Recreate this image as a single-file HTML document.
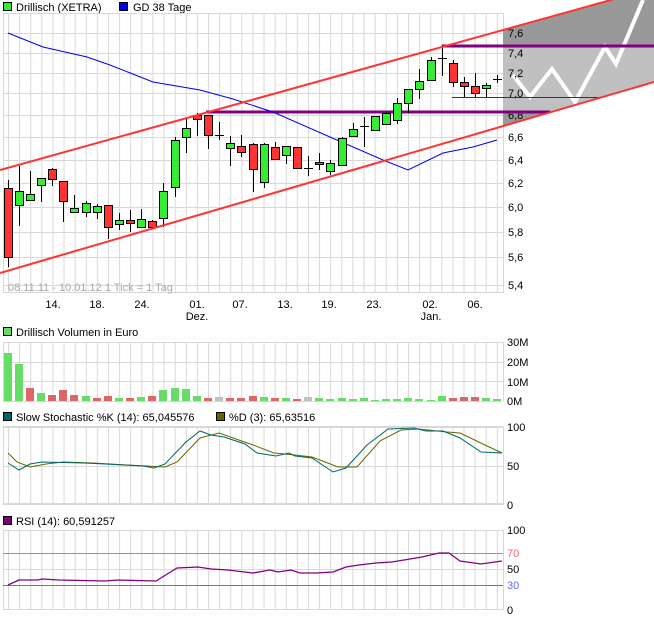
<!DOCTYPE html>
<html><head><meta charset="utf-8"><style>
html,body{margin:0;padding:0;background:#fff;}
svg{display:block;font-family:"Liberation Sans",sans-serif;font-size:11px;}
</style></head><body>
<svg width="654" height="618" viewBox="0 0 654 618" xmlns="http://www.w3.org/2000/svg">
<defs>
<pattern id="vg" x="8" y="0" width="11.11" height="618" patternUnits="userSpaceOnUse">
<rect x="0" y="0" width="1" height="618" fill="#d8d8d8"/>
</pattern>
<clipPath id="chan"><polygon points="503,29 654,-12 654,82 503,127"/></clipPath>
</defs>

<!-- legend -->
<rect x="3.5" y="2.5" width="8" height="8" fill="#33ee33" stroke="#000"/>
<text x="16" y="11" fill="#000">Drillisch (XETRA)</text>
<rect x="119.5" y="2.5" width="8" height="8" fill="#0000ee" stroke="#000"/>
<text x="133" y="11" fill="#000">GD 38 Tage</text>

<!-- main grid -->
<rect x="3" y="13" width="500" height="280" fill="url(#vg)"/>
<g stroke="#d8d8d8" stroke-width="1">
<line x1="3.5" y1="13" x2="3.5" y2="293"/>
<line x1="503.5" y1="13" x2="503.5" y2="293"/>
<line x1="3" y1="13.5" x2="503" y2="13.5"/>
<line x1="3" y1="33.5" x2="503" y2="33.5"/>
<line x1="3" y1="53.5" x2="503" y2="53.5"/>
<line x1="3" y1="73.5" x2="503" y2="73.5"/>
<line x1="3" y1="93.5" x2="503" y2="93.5"/>
<line x1="3" y1="115.5" x2="503" y2="115.5"/>
<line x1="3" y1="137.5" x2="503" y2="137.5"/>
<line x1="3" y1="160.5" x2="503" y2="160.5"/>
<line x1="3" y1="183.5" x2="503" y2="183.5"/>
<line x1="3" y1="207.5" x2="503" y2="207.5"/>
<line x1="3" y1="232.5" x2="503" y2="232.5"/>
<line x1="3" y1="257.5" x2="503" y2="257.5"/>
<line x1="3" y1="285.5" x2="503" y2="285.5"/>
<line x1="3" y1="292.5" x2="503" y2="292.5"/>
</g>

<!-- right projection area -->
<g clip-path="url(#chan)">
<rect x="503" y="-20" width="151" height="160" fill="#999"/>
<rect x="503" y="46" width="151" height="66" fill="#c0c0c0"/>
</g>
<polyline points="513,75 530,97 552,69 575,102 605,47 616,64 643,0" fill="none" stroke="#fff" stroke-width="4"/>

<!-- price labels -->
<g fill="#000">
<text x="508" y="37">7,6</text><text x="508" y="57">7,4</text><text x="508" y="77">7,2</text>
<text x="508" y="97">7,0</text><text x="508" y="119">6,8</text><text x="508" y="141">6,6</text>
<text x="508" y="164">6,4</text><text x="508" y="187">6,2</text><text x="508" y="211">6,0</text>
<text x="508" y="236">5,8</text><text x="508" y="261">5,6</text><text x="508" y="289">5,4</text>
</g>

<!-- horizontal lines -->
<line x1="206" y1="112" x2="550" y2="112" stroke="#800080" stroke-width="3"/>
<line x1="442" y1="46" x2="654" y2="46" stroke="#800080" stroke-width="3"/>
<line x1="452" y1="97.5" x2="603" y2="97.5" stroke="#800080" stroke-width="1"/>

<!-- blue MA -->
<polyline points="8,33 43,47 87,57 110,65 153,82 200,90 233,99 273,112 330,137 383,160 408,170 443,153 473,147 497,140" fill="none" stroke="#0000ee" stroke-width="1"/>

<!-- candles -->
<g stroke="#000" stroke-width="1">
<line x1="8.5" y1="180" x2="8.5" y2="267"/><rect x="4.5" y="188.5" width="8" height="69" fill="#ff3333"/>
<line x1="19.5" y1="166" x2="19.5" y2="226"/><rect x="15.5" y="191.5" width="8" height="14" fill="#33ee33"/>
<line x1="30.5" y1="171" x2="30.5" y2="200"/><rect x="26.5" y="194.5" width="8" height="6" fill="#33ee33"/>
<line x1="41.5" y1="178" x2="41.5" y2="202"/><rect x="37.5" y="178.5" width="8" height="7" fill="#33ee33"/>
<line x1="52.5" y1="168" x2="52.5" y2="186"/><rect x="48.5" y="169.5" width="8" height="10" fill="#ff3333"/>
<line x1="63.5" y1="181" x2="63.5" y2="222"/><rect x="59.5" y="181.5" width="8" height="20" fill="#ff3333"/>
<line x1="74.5" y1="195" x2="74.5" y2="212"/><rect x="70.5" y="208.5" width="8" height="4" fill="#33ee33"/>
<line x1="86.5" y1="201" x2="86.5" y2="217"/><rect x="82.5" y="203.5" width="8" height="9" fill="#33ee33"/>
<line x1="97.5" y1="204" x2="97.5" y2="219"/><rect x="93.5" y="206.5" width="8" height="6" fill="#33ee33"/>
<line x1="108.5" y1="205" x2="108.5" y2="239"/><rect x="104.5" y="205.5" width="8" height="22" fill="#ff3333"/>
<line x1="119.5" y1="213" x2="119.5" y2="230"/><rect x="115.5" y="220.5" width="8" height="4" fill="#33ee33"/>
<line x1="130.5" y1="210" x2="130.5" y2="232"/><rect x="126.5" y="220.5" width="8" height="3" fill="#ff3333"/>
<line x1="141.5" y1="209" x2="141.5" y2="228"/><rect x="137.5" y="219.5" width="8" height="8" fill="#33ee33"/>
<line x1="152.5" y1="220" x2="152.5" y2="228"/><rect x="148.5" y="221.5" width="8" height="6" fill="#ff3333"/>
<line x1="163.5" y1="183" x2="163.5" y2="227"/><rect x="159.5" y="191.5" width="8" height="27" fill="#33ee33"/>
<line x1="175.5" y1="137" x2="175.5" y2="197"/><rect x="171.5" y="140.5" width="8" height="47" fill="#33ee33"/>
<line x1="186.5" y1="119" x2="186.5" y2="153"/><rect x="182.5" y="128.5" width="8" height="9" fill="#33ee33"/>
<line x1="197.5" y1="113" x2="197.5" y2="136"/><rect x="193.5" y="115.5" width="8" height="4" fill="#ff3333"/>
<line x1="208.5" y1="115" x2="208.5" y2="149"/><rect x="204.5" y="115.5" width="8" height="20" fill="#ff3333"/>
<line x1="219.5" y1="122" x2="219.5" y2="140"/><line x1="215" y1="135.5" x2="224" y2="135.5"/>
<line x1="230.5" y1="136" x2="230.5" y2="166"/><rect x="226.5" y="143.5" width="8" height="5" fill="#33ee33"/>
<line x1="241.5" y1="135" x2="241.5" y2="157"/><rect x="237.5" y="146.5" width="8" height="6" fill="#ff3333"/>
<line x1="253.5" y1="143" x2="253.5" y2="192"/><rect x="249.5" y="144.5" width="8" height="25" fill="#ff3333"/>
<line x1="264.5" y1="143" x2="264.5" y2="188"/><rect x="260.5" y="144.5" width="8" height="38" fill="#33ee33"/>
<line x1="275.5" y1="142" x2="275.5" y2="160"/><rect x="271.5" y="147.5" width="8" height="12" fill="#ff3333"/>
<line x1="286.5" y1="146" x2="286.5" y2="164"/><rect x="282.5" y="146.5" width="8" height="9" fill="#33ee33"/>
<line x1="297.5" y1="147" x2="297.5" y2="169"/><rect x="293.5" y="147.5" width="8" height="21" fill="#ff3333"/>
<line x1="308.5" y1="156" x2="308.5" y2="176"/><line x1="304" y1="168.5" x2="313" y2="168.5"/>
<line x1="319.5" y1="153" x2="319.5" y2="170"/><rect x="315.5" y="162.5" width="8" height="2" fill="#ff3333"/>
<line x1="330.5" y1="160" x2="330.5" y2="175"/><rect x="326.5" y="163.5" width="8" height="8" fill="#33ee33"/>
<line x1="342.5" y1="137" x2="342.5" y2="166"/><rect x="338.5" y="138.5" width="8" height="27" fill="#33ee33"/>
<line x1="353.5" y1="123" x2="353.5" y2="137"/><rect x="349.5" y="129.5" width="8" height="7" fill="#33ee33"/>
<line x1="364.5" y1="117" x2="364.5" y2="147"/><line x1="360" y1="126.5" x2="369" y2="126.5"/>
<line x1="375.5" y1="116" x2="375.5" y2="130"/><rect x="371.5" y="116.5" width="8" height="14" fill="#33ee33"/>
<line x1="386.5" y1="112" x2="386.5" y2="124"/><rect x="382.5" y="113.5" width="8" height="11" fill="#33ee33"/>
<line x1="397.5" y1="98" x2="397.5" y2="124"/><rect x="393.5" y="103.5" width="8" height="17" fill="#33ee33"/>
<line x1="408.5" y1="89" x2="408.5" y2="113"/><rect x="404.5" y="89.5" width="8" height="14" fill="#33ee33"/>
<line x1="419.5" y1="69" x2="419.5" y2="99"/><rect x="415.5" y="81.5" width="8" height="8" fill="#33ee33"/>
<line x1="431.5" y1="57" x2="431.5" y2="80"/><rect x="427.5" y="60.5" width="8" height="20" fill="#33ee33"/>
<line x1="442.5" y1="45" x2="442.5" y2="76"/><line x1="438" y1="58.5" x2="447" y2="58.5"/>
<line x1="453.5" y1="60" x2="453.5" y2="87"/><rect x="449.5" y="63.5" width="8" height="19" fill="#ff3333"/>
<line x1="464.5" y1="77" x2="464.5" y2="97"/><rect x="460.5" y="82.5" width="8" height="4" fill="#ff3333"/>
<line x1="475.5" y1="73" x2="475.5" y2="97"/><rect x="471.5" y="86.5" width="8" height="7" fill="#ff3333"/>
<line x1="486.5" y1="83" x2="486.5" y2="97"/><rect x="482.5" y="85.5" width="8" height="3" fill="#33ee33"/>
<line x1="497.5" y1="75" x2="497.5" y2="83"/><line x1="493" y1="79.5" x2="502" y2="79.5"/>
</g>

<!-- red channel -->
<line x1="0" y1="170" x2="654" y2="-12" stroke="#ff3333" stroke-width="2"/>
<line x1="0" y1="273" x2="654" y2="82" stroke="#ff3333" stroke-width="2"/>

<text x="8" y="291" fill="#aaa">08.11.11 - 10.01.12   1 Tick = 1 Tag</text>

<!-- date labels -->
<g fill="#000" text-anchor="middle">
<text x="53" y="308">14.</text><text x="97" y="308">18.</text><text x="142" y="308">24.</text>
<text x="197" y="308">01.</text><text x="240" y="308">07.</text><text x="285" y="308">13.</text>
<text x="329" y="308">19.</text><text x="374" y="308">23.</text><text x="430" y="308">02.</text>
<text x="475" y="308">06.</text>
<text x="197" y="320">Dez.</text><text x="431" y="320">Jan.</text>
</g>

<!-- volume -->
<rect x="3.5" y="327.5" width="8" height="8" fill="#66dd66" stroke="#000"/>
<text x="16" y="336">Drillisch Volumen in Euro</text>
<rect x="3" y="342" width="500" height="59" fill="url(#vg)"/>
<g stroke="#d8d8d8">
<line x1="3.5" y1="342" x2="3.5" y2="401"/><line x1="503.5" y1="342" x2="503.5" y2="401"/>
<line x1="3" y1="342.5" x2="503" y2="342.5"/><line x1="3" y1="362.5" x2="503" y2="362.5"/>
<line x1="3" y1="381.5" x2="503" y2="381.5"/>
</g>
<g>
<rect x="4" y="353" width="8" height="48" fill="#66dd66"/>
<rect x="15" y="364" width="8" height="37" fill="#66dd66"/>
<rect x="26" y="388" width="8" height="13" fill="#dd6666"/>
<rect x="37" y="393" width="8" height="8" fill="#66dd66"/>
<rect x="48" y="395" width="8" height="6" fill="#dd6666"/>
<rect x="59" y="390" width="8" height="11" fill="#dd6666"/>
<rect x="70" y="395" width="8" height="6" fill="#dd6666"/>
<rect x="82" y="396" width="8" height="5" fill="#66dd66"/>
<rect x="93" y="398" width="8" height="3" fill="#dd6666"/>
<rect x="104" y="396" width="8" height="5" fill="#dd6666"/>
<rect x="115" y="398" width="8" height="3" fill="#66dd66"/>
<rect x="126" y="398" width="8" height="3" fill="#dd6666"/>
<rect x="137" y="397" width="8" height="4" fill="#66dd66"/>
<rect x="148" y="396" width="8" height="5" fill="#dd6666"/>
<rect x="159" y="390" width="8" height="11" fill="#66dd66"/>
<rect x="171" y="388" width="8" height="13" fill="#66dd66"/>
<rect x="182" y="389" width="8" height="12" fill="#66dd66"/>
<rect x="193" y="396" width="8" height="5" fill="#66dd66"/>
<rect x="204" y="398" width="8" height="3" fill="#dd6666"/>
<rect x="215" y="397" width="8" height="4" fill="#c0c0c0"/>
<rect x="226" y="398" width="8" height="3" fill="#dd6666"/>
<rect x="237" y="398" width="8" height="3" fill="#dd6666"/>
<rect x="249" y="396" width="8" height="5" fill="#dd6666"/>
<rect x="260" y="397" width="8" height="4" fill="#66dd66"/>
<rect x="271" y="398" width="8" height="3" fill="#dd6666"/>
<rect x="282" y="398" width="8" height="3" fill="#66dd66"/>
<rect x="293" y="399" width="8" height="2" fill="#dd6666"/>
<rect x="304" y="397" width="8" height="4" fill="#c0c0c0"/>
<rect x="315" y="398" width="8" height="3" fill="#66dd66"/>
<rect x="326" y="399" width="8" height="2" fill="#66dd66"/>
<rect x="338" y="398" width="8" height="3" fill="#66dd66"/>
<rect x="349" y="399" width="8" height="2" fill="#66dd66"/>
<rect x="360" y="398" width="8" height="3" fill="#66dd66"/>
<rect x="371" y="400" width="8" height="1" fill="#66dd66"/>
<rect x="382" y="399" width="8" height="2" fill="#66dd66"/>
<rect x="393" y="399" width="8" height="2" fill="#66dd66"/>
<rect x="404" y="398" width="8" height="3" fill="#66dd66"/>
<rect x="415" y="399" width="8" height="2" fill="#66dd66"/>
<rect x="427" y="400" width="8" height="1" fill="#66dd66"/>
<rect x="438" y="396" width="8" height="5" fill="#66dd66"/>
<rect x="449" y="398" width="8" height="3" fill="#dd6666"/>
<rect x="460" y="397" width="8" height="4" fill="#dd6666"/>
<rect x="471" y="397" width="8" height="4" fill="#dd6666"/>
<rect x="482" y="398" width="8" height="3" fill="#66dd66"/>
<rect x="493" y="399" width="8" height="2" fill="#66dd66"/>
</g>
<line x1="3" y1="401.5" x2="503" y2="401.5" stroke="#d8d8d8"/>
<g fill="#000">
<text x="507" y="346">30M</text><text x="507" y="366">20M</text>
<text x="507" y="386">10M</text><text x="507" y="405">0M</text>
</g>

<!-- stochastic -->
<rect x="3.5" y="412.5" width="8" height="8" fill="#006666" stroke="#000"/>
<text x="16" y="421">Slow Stochastic %K (14): 65,045576</text>
<rect x="216.5" y="412.5" width="8" height="8" fill="#666600" stroke="#000"/>
<text x="229" y="421">%D (3): 65,63516</text>
<rect x="3" y="427" width="500" height="78" fill="url(#vg)"/>
<g stroke="#d8d8d8">
<line x1="3.5" y1="427" x2="3.5" y2="505"/><line x1="503.5" y1="427" x2="503.5" y2="505"/>
<line x1="3" y1="427" x2="503" y2="427" stroke-width="2"/>
<line x1="3" y1="466.5" x2="503" y2="466.5"/>
<line x1="3" y1="504" x2="503" y2="504" stroke-width="2"/>
</g>
<polyline points="8,453 17,462 30,467 46,464 63,462 93,463 127,465 165,467 177,462 200,438 219,433 253,445 274,453 295,455 312,457 338,467 357,467 380,441 401,430 418,429 447,432 460,433 485,445 502,453" fill="none" stroke="#666600"/>
<polyline points="8,463 19,470 30,464 42,462 84,463 105,464 143,466 154,468 165,464 186,442 200,431 211,435 224,437 245,444 257,453 276,456 289,453 295,456 312,458 333,472 346,468 367,445 388,429 414,428 426,431 443,431 460,438 481,452 502,453" fill="none" stroke="#006666"/>
<g fill="#000">
<text x="507" y="431">100</text><text x="507" y="470">50</text><text x="507" y="509">0</text>
</g>

<!-- RSI -->
<rect x="3.5" y="516.5" width="8" height="8" fill="#800080" stroke="#000"/>
<text x="16" y="525">RSI (14): 60,591257</text>
<rect x="3" y="530" width="500" height="80" fill="url(#vg)"/>
<g stroke="#d8d8d8">
<line x1="3.5" y1="530" x2="3.5" y2="610"/><line x1="503.5" y1="530" x2="503.5" y2="610"/>
<line x1="3" y1="530.5" x2="503" y2="530.5"/><line x1="3" y1="569.5" x2="503" y2="569.5"/>
<line x1="3" y1="609.5" x2="503" y2="609.5"/>
</g>
<line x1="3" y1="553.5" x2="503" y2="553.5" stroke="#ff6666"/>
<line x1="3" y1="585.5" x2="503" y2="585.5" stroke="#6666ff"/>
<polyline points="8,585 19,580 38,580 42,579 59,580 105,581 118,580 156,581 177,568 198,567 211,569 228,570 253,573 270,570 278,572 291,570 300,573 316,573 333,572 346,567 359,565 376,563 392,562 422,557 439,553 449,553 460,561 481,564 502,561" fill="none" stroke="#800080" stroke-width="1.3"/>
<text x="507" y="534" fill="#000">100</text>
<text x="507" y="557" fill="#ff6666">70</text>
<text x="507" y="573" fill="#000">50</text>
<text x="507" y="589" fill="#6666ff">30</text>
<text x="507" y="614" fill="#000">0</text>
</svg>
</body></html>
